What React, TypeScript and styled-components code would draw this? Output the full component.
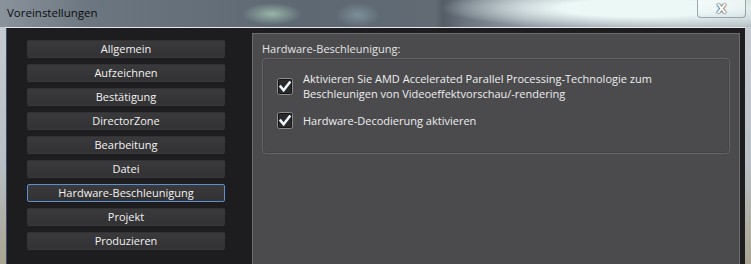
import React from 'react'
import styled, { createGlobalStyle } from 'styled-components'

const GlobalStyle = createGlobalStyle`
    html, body {
        margin: 0;
        padding: 0;
        background: #c9ced3;
        overflow: hidden;
    }
    #root {
        width: 751px;
        height: 264px;
    }
`

const StyledWindow = styled.div`
    display: flex;
    flex-direction: column;
    width: 751px;
    height: 264px;
    overflow: hidden;
    font-family: "Open Sans", "Noto Sans", sans-serif;
    font-size: 11px;
    background: linear-gradient(180deg, #c6ccd2 0%, #b9c0c6 60%, #a9a392 100%);
`

const StyledTitleBar = styled.div`
    display: flex;
    flex-direction: row;
    justify-content: space-between;
    align-items: flex-start;
    height: 27px;
    flex-shrink: 0;
    background:
        radial-gradient(ellipse 30px 11px at 272px 14px, rgba(190, 230, 200, 0.6), rgba(190, 230, 200, 0) 100%),
        radial-gradient(ellipse 22px 12px at 358px 15px, rgba(160, 190, 200, 0.45), rgba(160, 190, 200, 0) 100%),
        radial-gradient(ellipse 200px 22px at 640px 8px, rgba(235, 248, 246, 1) 40%, rgba(235, 248, 246, 0) 100%),
        linear-gradient(90deg, #8a939c 0%, #6c7680 12%, #5d6873 40%, #626b74 58%, #545c66 59%, #6b7580 62%, #8f9aa3 70%, #b9c4c8 100%);
`

const StyledTitle = styled.div`
    padding: 5px 0 0 7px;
    color: #0c0c0c;
    font-size: 11.5px;
    line-height: 16px;
`

const StyledClose = styled.div`
    display: flex;
    align-items: center;
    justify-content: center;
    width: 47px;
    height: 17px;
    margin-right: 5px;
    border: 1px solid rgba(90, 100, 110, 0.55);
    border-top: none;
    border-radius: 0 0 4px 4px;
    background: linear-gradient(180deg, rgba(255, 255, 255, 0.55), rgba(220, 232, 236, 0.3));
    color: #ffffff;
    font-family: "DejaVu Sans", sans-serif;
    font-size: 13px;
    font-weight: bold;
    line-height: 1;
    text-shadow: 0 0 1px #3c4650, 0 0 1px #3c4650, 0 0 2px #3c4650;
`

const StyledClient = styled.div`
    display: flex;
    flex-direction: row;
    flex: 1;
    margin: 0 6px;
    border-top: 1px solid #e6eaee;
    box-shadow: inset 1px 0 0 #3a4a63;
    background: #1d1d1f;
`

const StyledSidebar = styled.div`
    display: flex;
    flex-direction: column;
    gap: 6px;
    width: 198px;
    padding: 12px 27px 0 21px;
    flex-shrink: 0;
`

const StyledNavButton = styled.div<{ $active?: boolean }>`
    display: flex;
    align-items: center;
    justify-content: center;
    height: 18px;
    box-sizing: border-box;
    border: 1px solid ${p => p.$active ? '#5b8fcf' : 'transparent'};
    border-radius: 2px;
    background: linear-gradient(180deg, #3a393b 0%, #323133 100%);
    color: #f2f2f2;
    font-size: 11px;
    line-height: 16px;
    white-space: nowrap;
`

const StyledPanel = styled.div`
    display: flex;
    flex-direction: column;
    width: 488px;
    box-sizing: border-box;
    margin-top: 5px;
    padding: 0 9px;
    border: 1px solid #6b6b6e;
    border-bottom: none;
    background: #4b4b4e;
`

const StyledHeader = styled.div`
    margin-top: 7px;
    color: #e4e4e4;
    font-size: 11px;
    line-height: 16px;
`

const StyledGroup = styled.div`
    display: flex;
    flex-direction: column;
    gap: 11px;
    height: 96px;
    box-sizing: border-box;
    margin-top: 1px;
    padding: 12px 14px 0 14px;
    border: 1px solid #636366;
    border-radius: 4px;
    box-shadow: inset 0 0 0 1px rgba(60, 60, 62, 0.5);
`

const StyledOption = styled.label`
    display: flex;
    flex-direction: row;
    align-items: center;
    gap: 10px;
    color: #eeeeee;
    font-size: 11px;
    line-height: 15px;
`

const StyledBox = styled.svg`
    flex-shrink: 0;
    width: 16px;
    height: 17px;
`

const CheckBox = () => (
    <StyledBox viewBox="0 0 16 17">
        <rect x="0.5" y="0.5" width="15" height="16" rx="2" fill="#2a2a2c" stroke="#8c8c90" />
        <rect x="1.5" y="1.5" width="13" height="14" rx="1" fill="none" stroke="#161617" />
        <path d="M3.6 8.6 L6.6 12.2 L12.6 4.4" fill="none" stroke="#eef8ff" strokeWidth="2.5" strokeLinecap="square" />
    </StyledBox>
)

const navItems = [
    'Allgemein',
    'Aufzeichnen',
    'Bestätigung',
    'DirectorZone',
    'Bearbeitung',
    'Datei',
    'Hardware-Beschleunigung',
    'Projekt',
    'Produzieren',
]

const App = () => {
    return (
        <StyledWindow>
            <GlobalStyle />
            <StyledTitleBar>
                <StyledTitle>Voreinstellungen</StyledTitle>
                <StyledClose>X</StyledClose>
            </StyledTitleBar>
            <StyledClient>
                <StyledSidebar>
                    {navItems.map(item => (
                        <StyledNavButton key={item} $active={item === 'Hardware-Beschleunigung'}>
                            {item}
                        </StyledNavButton>
                    ))}
                </StyledSidebar>
                <StyledPanel>
                    <StyledHeader>Hardware-Beschleunigung:</StyledHeader>
                    <StyledGroup>
                        <StyledOption>
                            <CheckBox />
                            <span>
                                Aktivieren Sie AMD Accelerated Parallel Processing-Technologie zum
                                <br />
                                Beschleunigen von Videoeffektvorschau/-rendering
                            </span>
                        </StyledOption>
                        <StyledOption>
                            <CheckBox />
                            <span>Hardware-Decodierung aktivieren</span>
                        </StyledOption>
                    </StyledGroup>
                </StyledPanel>
            </StyledClient>
        </StyledWindow>
    )
}

export default App
